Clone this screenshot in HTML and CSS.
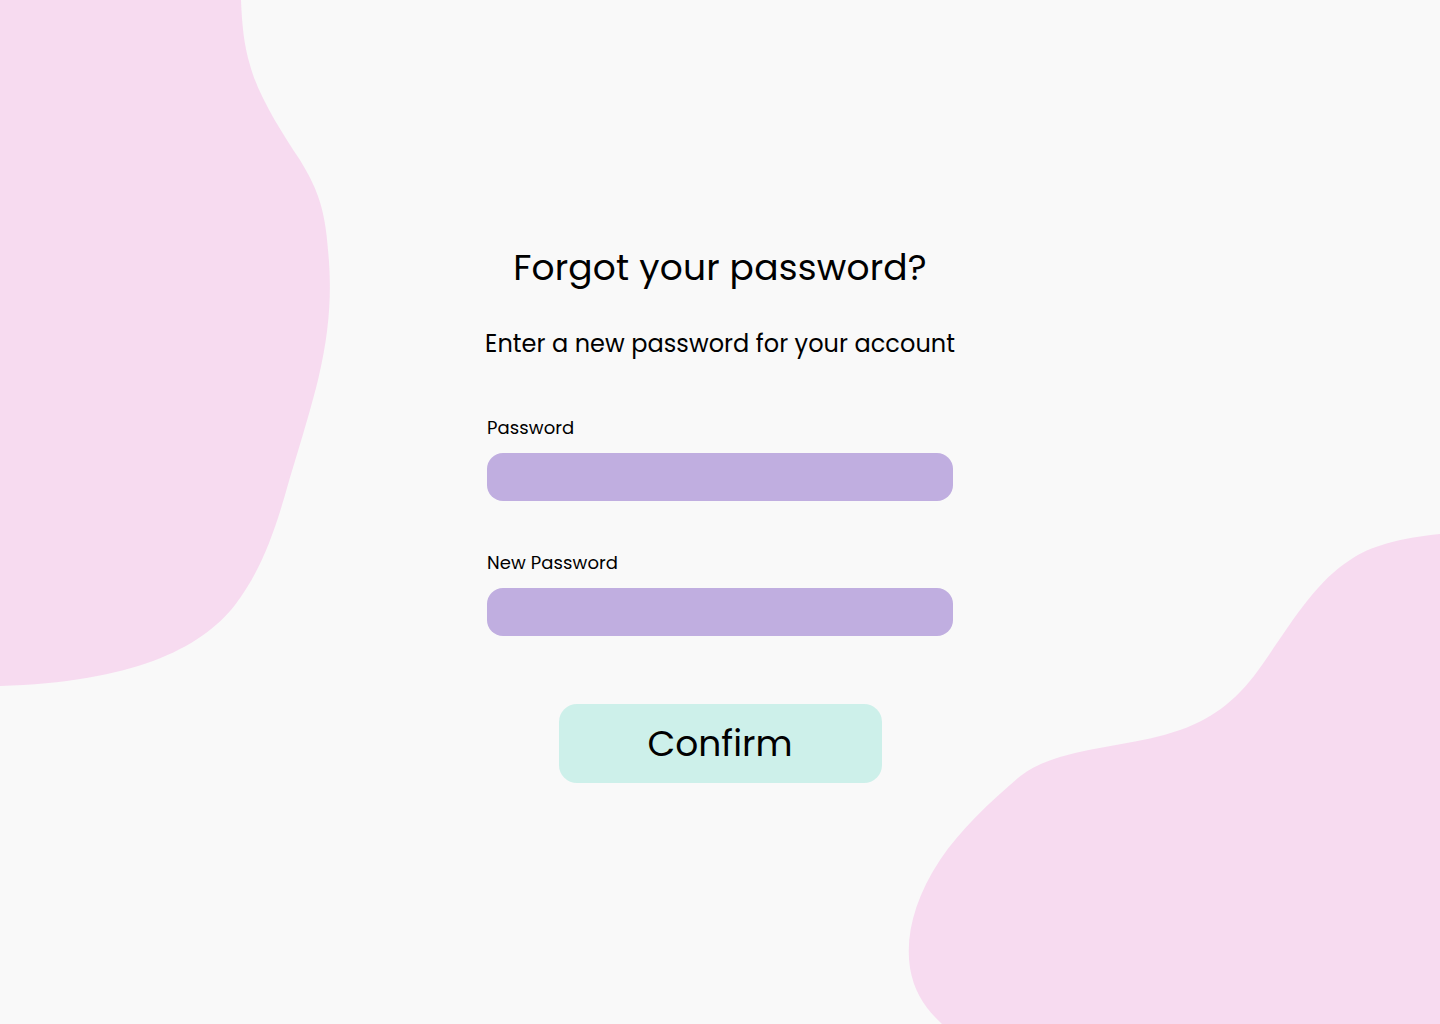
FILE: index.html
```html
<!DOCTYPE html>
<html lang="en">
<head>
<meta charset="utf-8">
<title>Forgot your password?</title>
<link rel="stylesheet" href="styles.css">
</head>
<body>
<svg class="backdrop" width="1440" height="1024" viewBox="0 0 1440 1024" aria-hidden="true">
  <path fill="#F7DBF0" d="M0 0 L241 0 C242 25 244 45 250 65 C258 95 280 130 300 160 C315 185 325 205 328 250 C332 290 330 330 318 380 C308 420 298 450 285 495 C272 540 258 575 235 605 C200 650 130 682 0 686 Z"/>
  <path fill="#F7DBF0" d="M1440 534 C1400 538 1370 546 1350 560 C1315 582 1290 625 1262 665 C1240 697 1215 718 1180 730 C1140 744 1100 745 1060 757 C1040 763 1028 770 1018 778 C990 802 960 830 940 860 C915 898 905 935 910 968 C914 992 925 1008 942 1024 L1440 1024 Z"/>
</svg>
<main class="form-wrap">
  <h1 class="title">Forgot your password?</h1>
  <p class="subtitle">Enter a new password for your account</p>
  <form class="form">
    <label class="field">
      <span class="label">Password</span>
      <input class="input" type="password">
    </label>
    <label class="field field-second">
      <span class="label">New Password</span>
      <input class="input" type="password">
    </label>
    <button class="confirm" type="button">Confirm</button>
  </form>
</main>
</body>
</html>
```

FILE: styles.css
```css
* { box-sizing: border-box; }
html, body {
  margin: 0;
  padding: 0;
  width: 1440px;
  height: 1024px;
  overflow: hidden;
}
body {
  background: #F9F9F9;
  font-family: "Poppins", "Open Sans", "DejaVu Sans", sans-serif;
  color: #000;
  position: relative;
}
.backdrop {
  position: absolute;
  left: 0;
  top: 0;
  z-index: 0;
}
.form-wrap {
  position: relative;
  z-index: 1;
  display: flex;
  flex-direction: column;
  align-items: center;
  padding-top: 244px;
}
.title {
  margin: 0;
  font-size: 36px;
  font-weight: 400;
  line-height: 48px;
  letter-spacing: 0.2px;
}
.subtitle {
  margin: 36px 0 0;
  font-size: 24px;
  font-weight: 400;
  line-height: 32px;
  letter-spacing: 0.05px;
}
.form {
  width: 466px;
  margin-top: 56px;
  display: flex;
  flex-direction: column;
}
.field {
  display: flex;
  flex-direction: column;
  gap: 13px;
}
.field-second { margin-top: 50px; }
.label {
  font-size: 18px;
  font-weight: 400;
  line-height: 24px;
  letter-spacing: 0.1px;
}
.input {
  width: 466px;
  height: 48px;
  border: none;
  border-radius: 16px;
  background: #C0AEE0;
  outline: none;
  padding: 0 16px;
  font: inherit;
}
.confirm {
  align-self: center;
  margin-top: 68px;
  width: 323px;
  height: 79px;
  border: none;
  border-radius: 18px;
  background: #CDF0EA;
  color: #000;
  font-family: inherit;
  font-size: 36px;
  font-weight: 400;
  cursor: pointer;
}
```
